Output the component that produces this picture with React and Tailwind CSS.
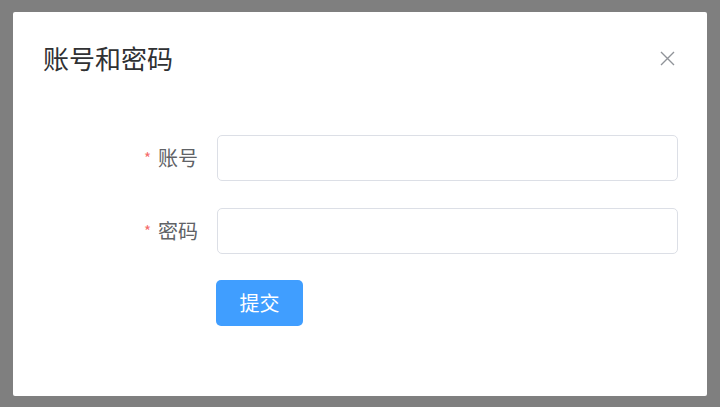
import { useState } from 'react'

const FONT = '[font-family:"Noto_Sans_CJK_SC","Noto_Sans",sans-serif]'

function Field({ label, type = 'text', value, onChange }) {
  return (
    <div className="flex items-center">
      <label className="flex w-[204px] shrink-0 items-center justify-end pr-[19px] text-[20px] text-[#606266]">
        <span className="mr-[7px] text-[15px] text-[#f56c6c]">*</span>
        {label}
      </label>
      <input
        type={type}
        value={value}
        onChange={(e) => onChange(e.target.value)}
        className="h-[46px] w-[461px] rounded-[5px] border border-[#dcdfe6] bg-white px-4 text-[18px] text-[#606266] outline-none focus:border-[#409eff]"
      />
    </div>
  )
}

export default function App() {
  const [account, setAccount] = useState('')
  const [password, setPassword] = useState('')

  return (
    <div className={`h-[407px] w-[720px] overflow-hidden bg-[#7f7f7f] pl-[13px] pt-[12px] ${FONT}`}>
      <div className="flex h-[384px] w-[694px] flex-col rounded-[2px] bg-white">
        <div className="flex items-center justify-between pl-[30px] pr-[30px] pt-[28px]">
          <h2 className="text-[26px] leading-[36px] text-[#303133]">账号和密码</h2>
          <button className="flex h-[20px] w-[20px] items-center justify-center text-[#909399]" aria-label="close">
            <svg width="15" height="15" viewBox="0 0 15 15" fill="none" stroke="currentColor" strokeWidth="1.4">
              <path d="M1 1L14 14M14 1L1 14" />
            </svg>
          </button>
        </div>

        <form className="mt-[59px] flex flex-col" onSubmit={(e) => e.preventDefault()}>
          <Field label="账号" value={account} onChange={setAccount} />
          <div className="mt-[27px]">
            <Field label="密码" type="password" value={password} onChange={setPassword} />
          </div>
          <div className="mt-[26px] pl-[203px]">
            <button
              type="submit"
              className="h-[46px] w-[87px] rounded-[5px] bg-[#409eff] text-[20px] text-white"
            >
              提交
            </button>
          </div>
        </form>
      </div>
    </div>
  )
}
